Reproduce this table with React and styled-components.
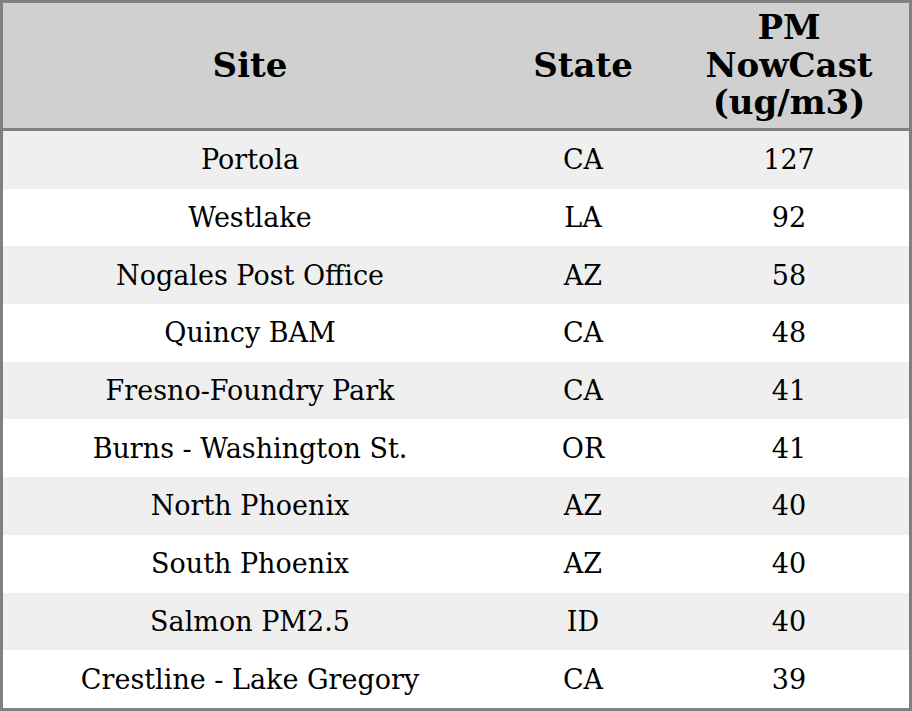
import React from "react";
import styled, { createGlobalStyle } from "styled-components";

const GlobalStyle = createGlobalStyle`
  html, body {
    margin: 0;
    padding: 0;
    background: #ffffff;
  }
`;

const rows = [
  { site: "Portola", state: "CA", pm: 127 },
  { site: "Westlake", state: "LA", pm: 92 },
  { site: "Nogales Post Office", state: "AZ", pm: 58 },
  { site: "Quincy BAM", state: "CA", pm: 48 },
  { site: "Fresno-Foundry Park", state: "CA", pm: 41 },
  { site: "Burns - Washington St.", state: "OR", pm: 41 },
  { site: "North Phoenix", state: "AZ", pm: 40 },
  { site: "South Phoenix", state: "AZ", pm: 40 },
  { site: "Salmon PM2.5", state: "ID", pm: 40 },
  { site: "Crestline - Lake Gregory", state: "CA", pm: 39 },
];

const App = () => {
  return (
    <>
      <GlobalStyle />
      <Table>
        <colgroup>
          <col style={{ width: "494px" }} />
          <col style={{ width: "172px" }} />
          <col />
        </colgroup>
        <thead>
          <tr>
            <Th>Site</Th>
            <Th>State</Th>
            <Th>
              PM
              <br />
              NowCast
              <br />
              (ug/m3)
            </Th>
          </tr>
        </thead>
        <tbody>
          {rows.map((row, i) => (
            <Row key={row.site} $striped={i % 2 === 0}>
              <Td>{row.site}</Td>
              <Td>{row.state}</Td>
              <Td>{row.pm}</Td>
            </Row>
          ))}
        </tbody>
      </Table>
    </>
  );
};

const Table = styled.table`
  width: 912px;
  border-collapse: separate;
  border-spacing: 0;
  border: 3px solid #808080;
  table-layout: fixed;
  font-family: "DejaVu Serif", serif;
  color: #000;
`;

const Th = styled.th`
  height: 125px;
  padding: 0;
  background-color: #d0d0d0;
  border-bottom: 3px solid #808080;
  font-size: 34px;
  font-weight: bold;
  line-height: 37.5px;
  text-align: center;
  vertical-align: middle;
`;

const Row = styled.tr`
  background-color: ${(props) => (props.$striped ? "#efefef" : "#ffffff")};
`;

const Td = styled.td`
  height: 57.7px;
  padding: 0;
  font-size: 27px;
  text-align: center;
  vertical-align: middle;
`;

export default App;
